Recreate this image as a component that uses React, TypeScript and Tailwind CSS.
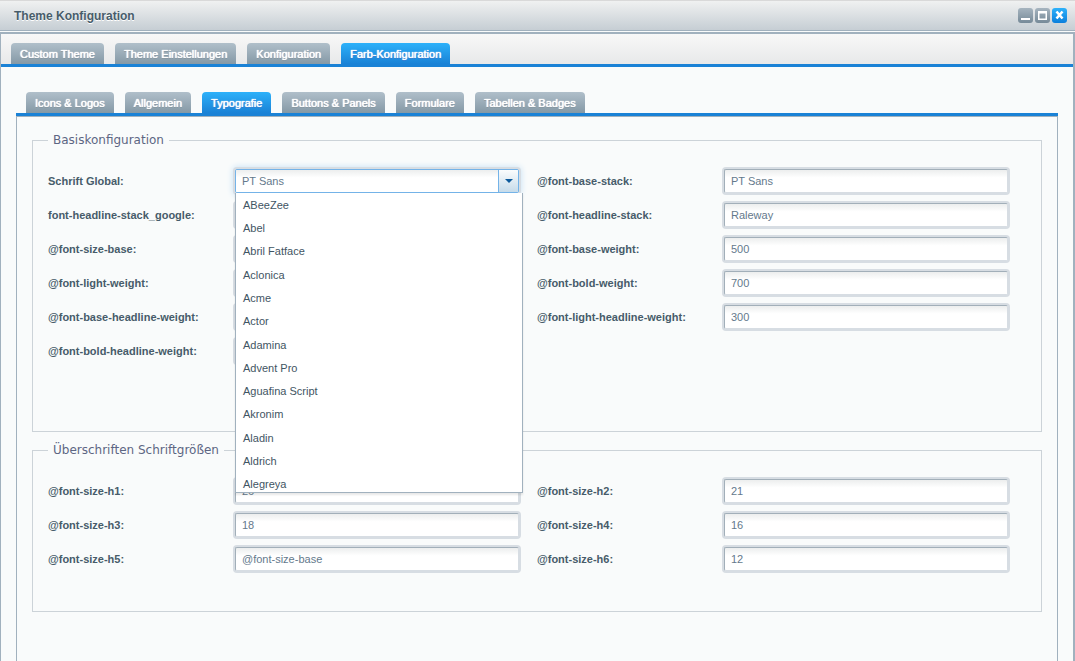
import { useState } from "react";

interface FieldProps {
  id: string;
  label: string;
  value?: string;
}

interface TabBarProps {
  tabs: string[];
  active: string;
  onSelect: (tab: string) => void;
}

const mainTabs = ["Custom Theme", "Theme Einstellungen", "Konfiguration", "Farb-Konfiguration"];
const subTabs = ["Icons & Logos", "Allgemein", "Typografie", "Buttons & Panels", "Formulare", "Tabellen & Badges"];

const fonts = [
  "ABeeZee",
  "Abel",
  "Abril Fatface",
  "Aclonica",
  "Acme",
  "Actor",
  "Adamina",
  "Advent Pro",
  "Aguafina Script",
  "Akronim",
  "Aladin",
  "Aldrich",
  "Alegreya",
];

const labelClass = "w-[185px] shrink-0 font-bold text-[#475c6a]";

function TabBar({ tabs, active, onSelect }: TabBarProps) {
  return (
    <div role="tablist" className="flex gap-[11px] pl-2.5 border-b-3 border-[#1a82d6]">
      {tabs.map((tab) => (
        <button
          key={tab}
          role="tab"
          aria-selected={tab === active}
          onClick={() => onSelect(tab)}
          className={
            tab === active
              ? "h-[21px] px-[9px] rounded-t-[4px] text-white bg-linear-to-b from-[#2db1fa] to-[#1a82d6] [text-shadow:0_0_1px_#fff,0_0_1px_#fff,0_1px_0_#1464c8]"
              : "h-[21px] px-[9px] rounded-t-[4px] text-white bg-linear-to-b from-[#b0bfca] to-[#8599a6] [text-shadow:0_0_1px_#fff,0_0_1px_#fff,0_1px_0_#71838f]"
          }
        >
          {tab}
        </button>
      ))}
    </div>
  );
}

function Field({ id, label, value = "" }: FieldProps) {
  return (
    <div className="flex items-center">
      <label htmlFor={id} className={labelClass}>
        {label}:
      </label>
      <div className="flex-1 min-w-0 p-[2px] rounded-[4px] bg-[#d7dde3]">
        <input
          id={id}
          defaultValue={value}
          className="block w-full h-6 px-1.5 rounded-[2px] border border-t-[#a2afb9] border-l-[#a2afb9] border-r-[#d7dde3] border-b-[#d7dde3] bg-white bg-linear-to-b from-[#eceeee] to-white to-35% text-[#64798c] outline-none"
        />
      </div>
    </div>
  );
}

function FontCombo() {
  const [open, setOpen] = useState(true);
  const [font, setFont] = useState("PT Sans");

  const choose = (name: string) => {
    setFont(name);
    setOpen(false);
  };

  return (
    <div className="flex items-center">
      <label htmlFor="font-global" className={labelClass}>
        Schrift Global:
      </label>
      <div className="relative flex-1 min-w-0 p-[2px] rounded-[4px] bg-[#d7dde3] shadow-[0_0_6px_#c4dff4]">
        <div className="flex h-6 rounded-[2px] border border-[#74b3e8] bg-white overflow-hidden">
          <input
            id="font-global"
            role="combobox"
            aria-expanded={open}
            aria-controls="font-list"
            value={font}
            onChange={(e) => setFont(e.target.value)}
            className="flex-1 min-w-0 px-1.5 bg-linear-to-b from-[#eceeee] to-white to-35% text-[#64798c] outline-none"
          />
          <button
            aria-label="Schriften anzeigen"
            onClick={() => setOpen(!open)}
            className="flex items-center justify-center w-5 border-l border-[#74b3e8] bg-linear-to-b from-[#fbfcfd] to-[#c6dbea]"
          >
            <svg width="8" height="4" viewBox="0 0 8 4">
              <path d="M0 0h8L4 4z" fill="#0d5a9c" />
            </svg>
          </button>
        </div>
        {open && (
          <div className="absolute z-10 top-[26px] left-[2px] -right-[2px] h-[300px] overflow-hidden bg-white border border-t-0 border-[#a1b1be] shadow-[0_2px_2px_#00000018]">
            <ul id="font-list" role="listbox" className="flex flex-col h-[303px]">
              {fonts.map((name) => (
                <li
                  key={name}
                  role="option"
                  aria-selected={name === font}
                  onClick={() => choose(name)}
                  className="flex flex-1 items-center px-[7px] text-[#3f5563] hover:bg-[#e4f1fb]"
                >
                  {name}
                </li>
              ))}
            </ul>
          </div>
        )}
      </div>
    </div>
  );
}

export default function App() {
  const [mainTab, setMainTab] = useState("Farb-Konfiguration");
  const [subTab, setSubTab] = useState("Typografie");

  return (
    <div className="flex flex-col min-h-screen bg-[#f9fbfb] text-[11px] leading-4 font-['Liberation_Sans',Arial,sans-serif]">
      <header className="flex items-center justify-between h-[31px] pl-3.5 pr-2 border-t border-b border-t-[#d9d9d9] border-b-[#a1b1be] bg-linear-to-b from-[#f0f1f1] to-[#c6ced4]">
        <h1 className="text-xs font-bold text-[#475c6a] [text-shadow:0_1px_0_#fff]">Theme Konfiguration</h1>
        <div className="flex gap-[2px]">
          <button aria-label="Minimieren" className="size-[15px] rounded-[3px] bg-linear-to-b from-[#a6b4bf] to-[#768a98]">
            <svg width="15" height="15" viewBox="0 0 15 15">
              <path d="M3 10h9v2H3z" fill="#fff" />
            </svg>
          </button>
          <button aria-label="Maximieren" className="size-[15px] rounded-[3px] bg-linear-to-b from-[#a6b4bf] to-[#768a98]">
            <svg width="15" height="15" viewBox="0 0 15 15">
              <path d="M3 3h9v9H3zM4.5 5.500v5h6v-5z" fill="#fff" fillRule="evenodd" />
            </svg>
          </button>
          <button aria-label="Schließen" className="size-[15px] rounded-[3px] bg-linear-to-b from-[#2db1fa] to-[#0a7fdc]">
            <svg width="15" height="15" viewBox="0 0 15 15">
              <path d="M4.5 3.500l6 7M10.500 3.500l-6 7" stroke="#fff" strokeWidth="2.600" />
            </svg>
          </button>
        </div>
      </header>

      <main className="flex flex-col flex-1 mt-px border-t-2 border-l border-r-2 border-[#a1b1be]">
        <div className="pt-[9px] bg-linear-to-b from-[#f8f8f8] to-[#e6e7e8]">
          <TabBar tabs={mainTabs} active={mainTab} onSelect={setMainTab} />
        </div>

        <div className="flex flex-col flex-1 pt-[25px] px-[15px]">
          <TabBar tabs={subTabs} active={subTab} onSelect={setSubTab} />

          <div className="flex-1 px-[15px] pt-[13px] border border-b-0 border-[#a1b1be]">
            <fieldset className="pl-[15px] pr-[31px] pb-[66px] border border-[#ccd3d8]">
              <legend className="px-[5px] leading-5 text-xs text-[#5d6683] font-['DejaVu_Sans',Verdana,sans-serif]">
                Basiskonfiguration
              </legend>
              <div className="grid grid-cols-2 gap-x-4 gap-y-1.5 pt-[17px]">
                <FontCombo />
                <Field id="base-stack" label="@font-base-stack" value="PT Sans" />
                <Field id="headline-google" label="font-headline-stack_google" />
                <Field id="headline-stack" label="@font-headline-stack" value="Raleway" />
                <Field id="size-base" label="@font-size-base" />
                <Field id="base-weight" label="@font-base-weight" value="500" />
                <Field id="light-weight" label="@font-light-weight" />
                <Field id="bold-weight" label="@font-bold-weight" value="700" />
                <Field id="base-headline" label="@font-base-headline-weight" />
                <Field id="light-headline" label="@font-light-headline-weight" value="300" />
                <Field id="bold-headline" label="@font-bold-headline-weight" />
              </div>
            </fieldset>

            <fieldset className="mt-2 pl-[15px] pr-[31px] pb-[38px] border border-[#ccd3d8]">
              <legend className="px-[5px] leading-5 text-xs text-[#5d6683] font-['DejaVu_Sans',Verdana,sans-serif]">
                Überschriften Schriftgrößen
              </legend>
              <div className="grid grid-cols-2 gap-x-4 gap-y-1.5 pt-[17px]">
                <Field id="size-h1" label="@font-size-h1" value="26" />
                <Field id="size-h2" label="@font-size-h2" value="21" />
                <Field id="size-h3" label="@font-size-h3" value="18" />
                <Field id="size-h4" label="@font-size-h4" value="16" />
                <Field id="size-h5" label="@font-size-h5" value="@font-size-base" />
                <Field id="size-h6" label="@font-size-h6" value="12" />
              </div>
            </fieldset>
          </div>
        </div>
      </main>
    </div>
  );
}
